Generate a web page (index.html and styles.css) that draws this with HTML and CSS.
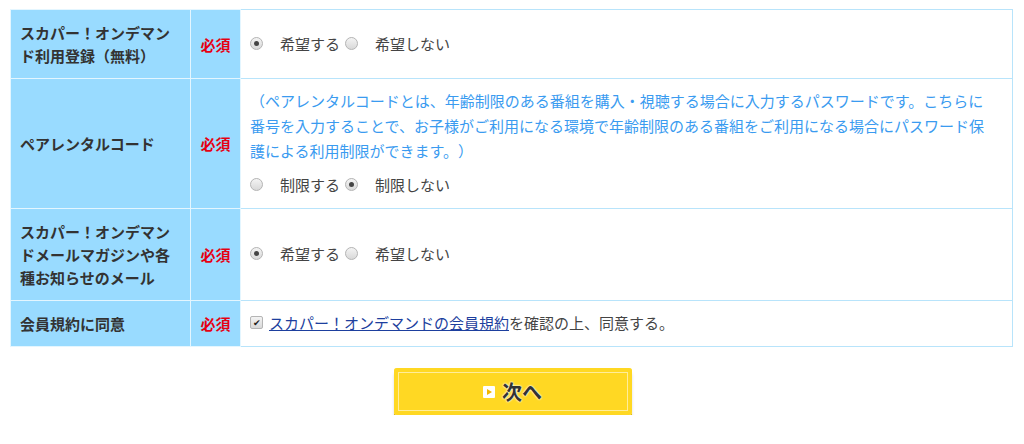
FILE: index.html
```html
<!DOCTYPE html>
<html lang="ja">
<head>
<meta charset="UTF-8" />
<title>会員登録</title>
<link rel="stylesheet" href="styles.css">
</head>
<body>

<!-- Registration form -->
<table class="formTable">
  <colgroup>
    <col class="colHead">
    <col class="colReq">
    <col>
  </colgroup>
  <tr>
    <th>スカパー！オンデマンド利用登録（無料）</th>
    <th class="req">必須</th>
    <td>
      <div class="opts">
        <label class="opt"><span class="radio checked"></span>希望する</label>
        <label class="opt"><span class="radio"></span>希望しない</label>
      </div>
    </td>
  </tr>
  <tr>
    <th>ペアレンタルコード</th>
    <th class="req">必須</th>
    <td class="parental">
      <p class="note">（ペアレンタルコードとは、年齢制限のある番組を購入・視聴する場合に入力するパスワードです。こちらに番号を入力することで、お子様がご利用になる環境で年齢制限のある番組をご利用になる場合にパスワード保護による利用制限ができます。）</p>
      <div class="opts">
        <label class="opt"><span class="radio"></span>制限する</label>
        <label class="opt"><span class="radio checked"></span>制限しない</label>
      </div>
    </td>
  </tr>
  <tr>
    <th>スカパー！オンデマンドメールマガジンや各種お知らせのメール</th>
    <th class="req">必須</th>
    <td>
      <div class="opts">
        <label class="opt"><span class="radio checked"></span>希望する</label>
        <label class="opt"><span class="radio"></span>希望しない</label>
      </div>
    </td>
  </tr>
  <tr>
    <th>会員規約に同意</th>
    <th class="req">必須</th>
    <td>
      <label class="agree"><span class="check">&#10004;</span><a href="#">スカパー！オンデマンドの会員規約</a>を確認の上、同意する。</label>
    </td>
  </tr>
</table>

<!-- Next button -->
<div class="btnArea">
  <button class="nextBtn"><span class="playIcon"></span>次へ</button>
</div>

</body>
</html>
```

FILE: styles.css
```css
body {
  margin: 0;
  background: #fff;
  color: #444;
  font-family: "Noto Sans CJK JP", sans-serif;
  font-size: 15px;
  text-spacing-trim: space-all;
}

/* Form table */
.formTable {
  margin: 9px 0 0 10px;
  width: 1003px;
  table-layout: fixed;
  border-collapse: collapse;
  border: 1px solid #b8e4fb;
}
.colHead { width: 180px; }
.colReq { width: 50px; }

.formTable th {
  background: #99dbff;
  border: 1px solid #e4f6ff;
  color: #333;
  font-weight: bold;
  text-align: left;
  line-height: 23px;
  padding: 11px 15px 11px 9px;
  vertical-align: middle;
}
.formTable th.req {
  color: #e60012;
  text-align: center;
  padding: 0;
}
.formTable td {
  border: 1px solid #b8e4fb;
  line-height: 23px;
  padding: 11px 25px 11px 9px;
  vertical-align: middle;
}
.formTable td.parental {
  padding-top: 9px;
  padding-bottom: 12px;
}

.note {
  margin: 0 0 12px 0;
  color: #3a9bf0;
  line-height: 25px;
}

/* Radio options */
.opts {
  display: flex;
  align-items: center;
  gap: 5px;
  margin-top: -2px;
}
.opt {
  display: flex;
  align-items: center;
}
.radio {
  width: 11px;
  height: 11px;
  border: 1px solid #b5b5b5;
  border-radius: 50%;
  background: linear-gradient(#f4f4f4, #d8d8d8);
  margin-right: 17px;
  position: relative;
}
.radio.checked::after {
  content: "";
  position: absolute;
  top: 3px; left: 3px;
  width: 5px;
  height: 5px;
  border-radius: 50%;
  background: #444;
}

/* Agree checkbox */
.agree {
  display: flex;
  align-items: center;
  margin-top: -2px;
}
.check {
  width: 11px;
  height: 11px;
  border: 1px solid #b5b5b5;
  border-radius: 2px;
  background: linear-gradient(#f4f4f4, #d8d8d8);
  margin-right: 6px;
  font-size: 9px;
  line-height: 11px;
  text-align: center;
  color: #222;
}
.agree a {
  color: #1d3f9e;
  text-decoration: underline;
}

/* Next button */
.btnArea {
  display: flex;
  justify-content: center;
  margin-top: 21px;
}
.nextBtn {
  width: 238px;
  height: 47px;
  margin-left: 1px;
  background: #ffd823;
  border: none;
  border-radius: 3px;
  box-shadow: 0 4px 0 #d6b20c, 0 5px 3px rgba(0, 0, 0, 0.15), inset 0 0 0 4px #ffd823, inset 0 0 0 5px rgba(255, 255, 255, 0.55);
  display: flex;
  align-items: center;
  justify-content: center;
  font-family: "Noto Sans CJK JP", sans-serif;
  font-size: 20px;
  font-weight: bold;
  color: #333;
  text-shadow: 0 0 2px #fff, 0 0 2px #fff;
  cursor: pointer;
}
.playIcon {
  width: 12px;
  height: 12px;
  background: #fff;
  border-radius: 1px;
  margin-right: 7px;
  position: relative;
}
.playIcon::after {
  content: "";
  position: absolute;
  top: 3px; left: 4px;
  border-left: 5px solid #f2b800;
  border-top: 3px solid transparent;
  border-bottom: 3px solid transparent;
}
```
